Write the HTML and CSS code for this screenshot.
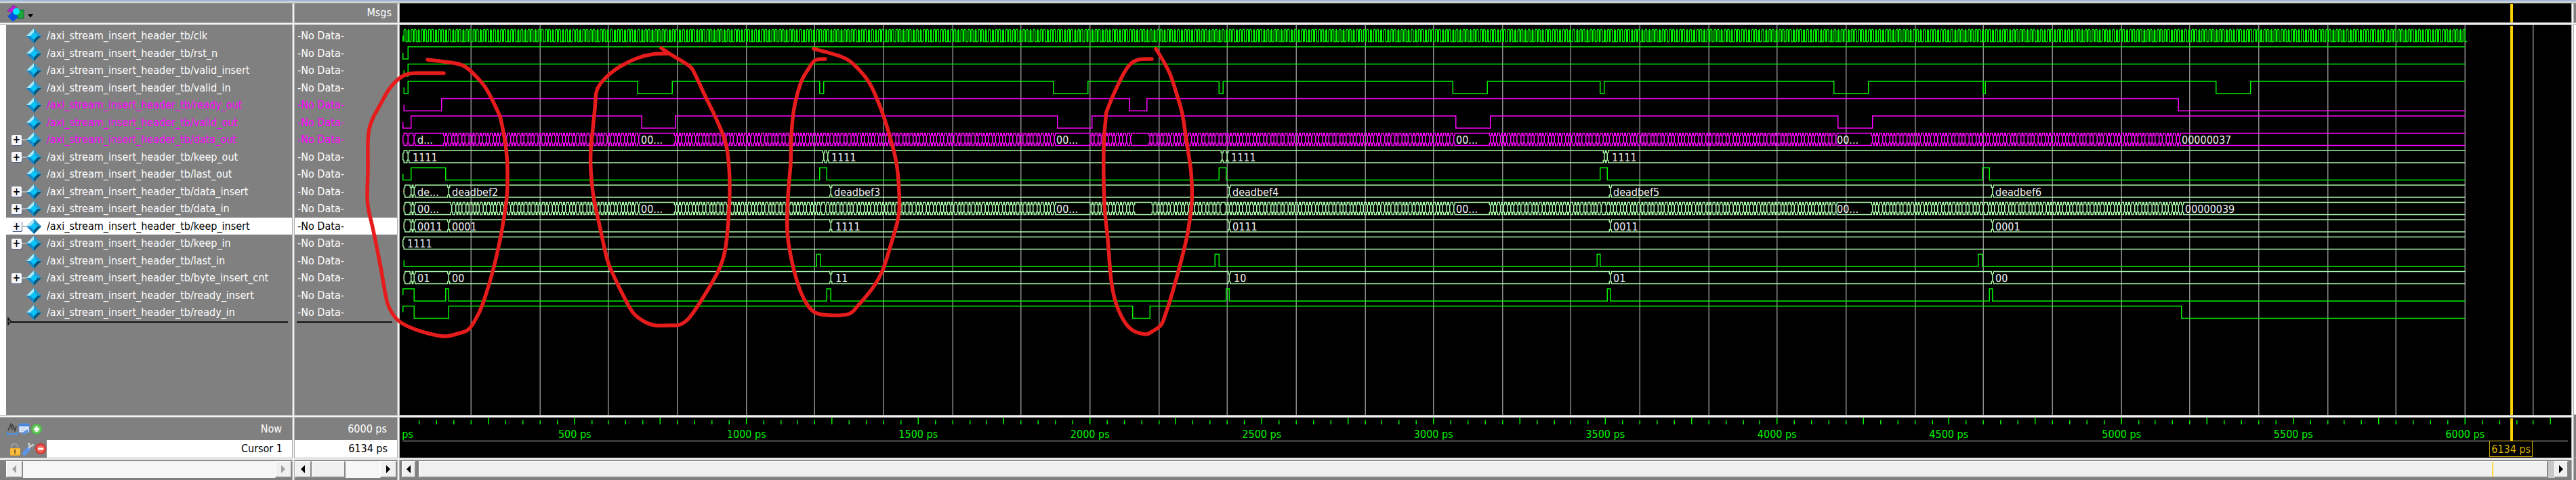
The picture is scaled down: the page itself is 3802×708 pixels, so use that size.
FILE: index.html
```html
<!DOCTYPE html>
<html lang="en">
<head>
<meta charset="utf-8">
<title>Wave</title>
<link rel="stylesheet" href="styles.css">
</head>
<body>
<svg class="defs" aria-hidden="true">
  <symbol id="gem" viewBox="0 0 22 22">
    <path d="M11 0 22 11 11 22 0 11Z" fill="#1488c8"/>
    <path d="M11 0 0 11 6 11 11 6Z" fill="#a8e8f8"/>
    <path d="M11 0 22 11 16 11 11 6Z" fill="#2a9ccf"/>
    <path d="M22 11 11 22 11 16 16 11Z" fill="#045880"/>
    <path d="M11 5.500 16.500 11 11 16.500 5.500 11Z" fill="#08c4f8"/>
  </symbol>
</svg>
<main class="wave-window">
  <div class="titlebar"></div>

  <header class="cell tools">
    <button class="menu" aria-label="Signal menu">
      <svg width="38" height="28" viewBox="0 0 38 28">
        <path d="M0 11 9 3 14 7 8 14Z" fill="#c41ee0" stroke="#7a1090"/>
        <rect x="14" y="10" width="10" height="12" fill="#18a83c" stroke="#0c7428"/>
        <path d="M8 12 16 20 8 27 0 19Z" fill="#0850e0"/>
        <circle cx="13" cy="12" r="5" fill="#00e8ff"/>
        <path d="M30 16h8l-4 5Z" fill="#000"/>
      </svg>
    </button>
  </header>
  <div class="cell msgs-head">Msgs</div>
  <div class="cell band"><div class="cursor-clip"><i class="cursor"></i></div></div>
  <div class="cell edge"></div>

  <section class="cell names">
    <ul class="rows" id="names"></ul>
    <svg class="marker" width="8" height="12" viewBox="0 0 8 12"><path d="M1 1v10l4-5Z" fill="none" stroke="#111" stroke-width="1.500"/></svg>
    <hr>
  </section>
  <section class="cell values">
    <ul class="rows" id="values"></ul>
    <hr>
  </section>
  <section class="cell plot">
    <svg id="plot" role="img" aria-label="Waveforms"></svg>
    <div class="cursor-clip"><i class="cursor"></i></div>
  </section>
  <div class="cell edge light"></div>

  <section class="cell labels">
    <div class="line">
      <svg width="56" height="24" viewBox="0 0 56 24" aria-hidden="true">
        <path d="M2 14 6 5l2 8M8 5l4 9 2-6" fill="none" stroke="#444" stroke-width="2"/>
        <path d="M1 19h14M1 16v5M15 16v5" stroke="#4a90e0" stroke-width="2"/>
        <rect x="18" y="4" width="15" height="13" rx="1" fill="#e4edfa" stroke="#5f96e0"/>
        <path d="M18 6h15" stroke="#4a86dc" stroke-width="4"/>
        <path d="M21 11h7M21 14h5" stroke="#8fa8c8"/>
        <path d="M22 18l8-6 2 3-5 5Z" fill="#5f96e0"/>
        <circle cx="44" cy="12" r="8" fill="#4fb846"/><circle cx="44" cy="12" r="6" fill="#74cc68"/>
        <path d="M44 8v8M40 12h8" stroke="#fff" stroke-width="3"/>
      </svg>
      <span>Now</span>
    </div>
    <div class="line">
      <svg width="59" height="24" viewBox="0 0 59 24" aria-hidden="true">
        <path d="M7 12V9a4.500 4.500 0 0 1 9 0v3" fill="none" stroke="#a0a0a0" stroke-width="2"/>
        <rect x="5" y="11" width="15" height="11" rx="1" fill="#f5b02c"/>
        <path d="M6 14h13M6 18h13" stroke="#ffdc80"/><path d="M12 13v6" stroke="#8a5a10" stroke-width="2"/>
        <path d="M26 19 32 12" stroke="#5c94e8" stroke-width="6" stroke-linecap="round"/>
        <path d="M32 11l3-3M33 3q-1 5 2 5 3 0 4-3" fill="none" stroke="#c4c8cc" stroke-width="3"/>
        <circle cx="50" cy="12" r="8" fill="#d83030"/><circle cx="50" cy="12" r="6" fill="#f06458"/>
        <path d="M46 12h8" stroke="#fff" stroke-width="3"/>
      </svg>
      <label for="now" class="field">Cursor 1</label>
    </div>
  </section>
  <section class="cell times">
    <div class="line"><span>6000 ps</span></div>
    <div class="line"><output id="now" class="field">6134 ps</output></div>
  </section>
  <section class="cell timeline">
    <svg id="timeline" role="img" aria-label="Time axis"></svg>
    <div class="cursor-clip axis"><i class="cursor"></i></div>
    <span class="cursor-label">6134 ps</span>
  </section>
  <div class="cell edge"></div>

  <div class="cell scroll first">
    <button class="off" aria-label="Scroll names left"><svg width="8" height="12"><path d="M7 0v12L1 6Z"/></svg></button>
    <div class="track"></div>
    <button class="off" aria-label="Scroll names right"><svg width="8" height="12"><path d="M1 0v12l6-6Z"/></svg></button>
  </div>
  <div class="cell scroll">
    <button aria-label="Scroll values left"><svg width="8" height="12"><path d="M7 0v12L1 6Z"/></svg></button>
    <div class="track"><div class="thumb small"></div></div>
    <button aria-label="Scroll values right"><svg width="8" height="12"><path d="M1 0v12l6-6Z"/></svg></button>
  </div>
  <div class="cell scroll wide">
    <button aria-label="Scroll waves left"><svg width="8" height="12"><path d="M7 0v12L1 6Z"/></svg></button>
    <div class="track groove"><div class="thumb"><i></i></div></div>
    <button aria-label="Scroll waves right"><svg width="8" height="12"><path d="M1 0v12l6-6Z"/></svg></button>
  </div>
  <div class="cell edge"></div>

  <svg class="ink" viewBox="0 0 3802 708" preserveAspectRatio="none" id="ink" aria-hidden="true"></svg>
</main>
<script src="wave.js"></script>
</body>
</html>
```
FILE: styles.css
```css
* { box-sizing: border-box; }

body {
  margin: 0;
  background: #f4f4f4;
  color: #fff;
  font: 16px/20px "DejaVu Sans Condensed", "DejaVu Sans", Verdana, sans-serif;
}

.defs { position: absolute; width: 0; height: 0; }

.wave-window {
  position: relative;
  display: grid;
  grid-template-columns: 431px 151px minmax(0, 1fr) 3px;
  grid-template-rows: 5px 28px minmax(579px, 1fr) 63px 33px;
  column-gap: 4px;
  min-height: 100vh;
  overflow: hidden;
}

.titlebar {
  grid-column: 1 / -1;
  background: linear-gradient(#9db6d4 2px, #d4d8dc 2px, #d4d8dc 4px, #808080 4px);
}

.cell {
  position: relative;
  min-width: 0;
  background: #808080;
  box-shadow: 0 0 0 1px #b0b0b0;
}

.names, .values, .plot, .edge.light, .labels, .times, .timeline, .scroll { margin-top: 4px; }
.edge.light { background: #fff; }

.tools { padding-left: 11px; }
button { margin: 0; padding: 0; border: 0; background: none; }
.menu { display: block; height: 28px; }
.menu svg { display: block; }

.msgs-head {
  display: flex;
  align-items: center;
  justify-content: flex-end;
  padding-right: 8px;
}

.band, .plot, .timeline { background: #000; }

.rows {
  display: grid;
  grid-auto-rows: 26px 25px;
  margin: 0;
  padding: 3px 0 0;
  list-style: none;
}

.rows li {
  display: flex;
  align-items: center;
  white-space: nowrap;
}

.names { border-left: 9px solid #fff; }
.names li { padding-left: 8px; }
.names li span { margin-left: 8px; }
.names svg { flex: none; }
.slot { display: flex; align-items: center; width: 22px; height: 22px; }
.toggle {
  width: 15px;
  height: 15px;
  border-radius: 2px;
  background: #f8f8fc;
  box-shadow: 1px 1px 0 #56648c;
  color: #000;
  font: bold 15px/14px "DejaVu Sans Condensed", "DejaVu Sans", sans-serif;
}
.slot .toggle + i { width: 7px; height: 2px; background: #b4b4b4; }
.values li { padding-left: 4px; }
.alt { color: #ff00ff; }
li.selected { background: #fff; color: #000; }

hr { height: 2px; margin: 0 7px 0 3px; border: 0; background: #101010; }
.names hr { margin: 0 6px 0 7px; }
.marker { position: absolute; left: 2px; top: 431px; }

.plot svg, .timeline svg { display: block; width: 100%; height: 100%; position: absolute; }
text { font: 16px "DejaVu Sans Condensed", "DejaVu Sans", Verdana, sans-serif; }

.cursor-clip { position: absolute; inset: 1px 0 0; overflow: hidden; }
.cursor-clip.axis { bottom: 25px; }
.cursor {
  position: absolute;
  left: 97.200%;
  width: 4px;
  height: 100%;
  background: #ffd000;
}
.cursor-label {
  position: absolute;
  right: 57px;
  bottom: 1px;
  padding: 2px 2px 0;
  border: 1px solid #d0a800;
  background: #000;
  color: #d8b000;
}

.labels, .times { display: grid; grid-template-rows: 33px 26px; text-align: right; }
.line { display: flex; align-items: center; justify-content: space-between; padding-left: 10px; }
.line svg { flex: none; }
.line > span { margin-left: auto; padding-right: 15px; }
.line .field {
  flex: 1;
  align-self: stretch;
  padding: 3px 14px 0 0;
  background: #fff;
  color: #000;
}
.times .line { padding-left: 0; }

.scroll { display: flex; padding: 1px 0 3px; }
.scroll.first { padding-left: 9px; }
.scroll.wide { padding: 1px 4px 3px 3px; }
.scroll button {
  flex: none;
  display: grid;
  place-items: center;
  width: 25px;
  background: #f0f0f0;
  border: 1px solid #fff;
  border-right: 2px solid #888;
  border-bottom: 2px solid #888;
}
.scroll.wide button { width: 21px; }
.scroll .off svg { fill: #a0a0a0; }
.track { flex: 1; display: flex; background: #f6f6f6; }
.thumb { flex: 1; background: #f0f0f0; border: 1px solid #fff; border-right: 2px solid #888; border-bottom: 2px solid #888; }
.thumb.small { flex: none; width: 50px; }
.groove { margin: 0 0 0 4px; padding-right: 9px; background: #c8c8c8; }
.groove .thumb { display: flex; justify-content: flex-end; padding-right: 79px; }
.groove i { width: 2px; background: #ffd84a; }

.ink { position: absolute; inset: 0; width: 100%; height: 100%; pointer-events: none; }
```
FILE: wave.js
```js
const G = '#00f000', M = '#ff00ff', P = '#a8f8a8';
const prefix = '/axi_stream_insert_header_tb/';
const W0 = 3205;      // design width of the wave pane
const ORIGIN = 590;   // left edge of the wave pane in data coordinates
const END = 3638;

// kind "bit": start level, then toggle positions. kind "bus": cells as [from, to, text, textX], "~" = dense run.
const signals = [
  { n: 'clk', kind: 'clk', c: G },
  { n: 'rst_n', kind: 'bit', c: G, s: 594.5, l: 0, e: [602] },
  { n: 'valid_insert', kind: 'bit', c: G, s: 596, l: 0, e: [602] },
  { n: 'valid_in', kind: 'bit', c: G, s: 596, l: 0, e: [602, 941, 992.5, 1209.5, 1216, 1555, 1606, 1799, 1804.5, 2144, 2195.5, 2362, 2368, 2706.5, 2758, 2926.5, 2930.5, 3270.6, 3322] },
  { n: 'ready_out', kind: 'bit', c: M, s: 596, l: 0, e: [652, 1667, 1693, 3215], alt: 1 },
  { n: 'valid_out', kind: 'bit', c: M, s: 594.5, l: 0, e: [607, 947.5, 997, 1561, 1612, 2149, 2200, 2713, 2764], alt: 1 },
  { n: 'data_out', kind: 'bus', c: M, alt: 1, plus: 1, cells: [[594.5, 602], [602, 611], [611, 656, 'd...', 617], [656, 942, '~'], [942, 996, '00...', 947], [996, 1556, '~'], [1556, 1610, '00...', 1560], [1610, 1668, '~'], [1668, 1697], [1697, 2145, '~'], [2145, 2199, '00...', 2150], [2199, 2709, '~'], [2709, 2763, '00...', 2712], [2763, 3217, '~'], [3217, END, '00000037', 3221]] },
  { n: 'keep_out', kind: 'bus', c: P, plus: 1, cells: [[594.5, 602.5], [602.5, 1215, '1111', 610], [1215, 1221], [1221, 1803, '1111', 1228], [1803, 1811], [1811, 2367, '1111', 1818], [2367, 2372.5], [2372.5, END, '1111', 2380]] },
  { n: 'last_out', kind: 'bit', c: G, s: 594.5, l: 0, e: [607, 657.5, 1209.5, 1220, 1799.5, 1810, 2362, 2372.5, 2926, 2936] },
  { n: 'data_insert', kind: 'bus', c: P, plus: 1, x: 1, cells: [[596, 607], [607, 611], [611, 662, 'de...', 617], [662, 1226, 'deadbef2', 668], [1226, 1814, 'deadbef3', 1232], [1814, 2376, 'deadbef4', 1820], [2376, 2940, 'deadbef5', 2382], [2940, END, 'deadbef6', 2946]] },
  { n: 'data_in', kind: 'bus', c: P, plus: 1, x: 1, cells: [[596, 607], [607, 611], [611, 667, '00...', 617], [667, 942, '~'], [942, 996, '00...', 947], [996, 1211, '~'], [1211, 1219], [1219, 1556, '~'], [1556, 1610, '00...', 1560], [1610, 1673, '~'], [1673, 1702], [1702, 1800, '~'], [1800, 1809], [1809, 2145, '~'], [2145, 2199, '00...', 2150], [2199, 2363, '~'], [2363, 2371], [2371, 2709, '~'], [2709, 2763, '00...', 2712], [2763, 2927, '~'], [2927, 2934], [2934, 3221, '~'], [3221, END, '00000039', 3226]] },
  { n: 'keep_insert', kind: 'bus', c: P, plus: 1, x: 1, sel: 1, cells: [[596, 607], [607, 611], [611, 662, '0011', 617], [662, 1226, '0001', 668], [1226, 1814, '1111', 1234], [1814, 2376, '0111', 1820], [2376, 2940, '0011', 2382], [2940, END, '0001', 2946]] },
  { n: 'keep_in', kind: 'bus', c: P, plus: 1, cells: [[594.5, END, '1111', 602]] },
  { n: 'last_in', kind: 'bit', c: G, s: 596, l: 0, e: [1204.5, 1210.5, 1793.5, 1799.5, 2357, 2362, 2920, 2926] },
  { n: 'byte_insert_cnt', kind: 'bus', c: P, plus: 1, x: 1, cells: [[596, 607], [607, 611], [611, 662, '01', 617], [662, 1226, '00', 668], [1226, 1814, '11', 1234], [1814, 2376, '10', 1822], [2376, 2940, '01', 2382], [2940, END, '00', 2946]] },
  { n: 'ready_insert', kind: 'bit', c: G, s: 594.5, l: 1, e: [611, 657.5, 662.5, 1220, 1226.5, 1810, 1814.5, 2372.5, 2376, 2936.5, 2940] },
  { n: 'ready_in', kind: 'bit', c: G, s: 594.5, l: 1, e: [611, 662.5, 1672, 1697.5, 3219.5] }
];

document.getElementById('names').innerHTML = signals.map(s =>
  `<li class="${s.alt ? 'alt' : ''}${s.sel ? 'selected' : ''}"><div class="slot">${s.plus ? `<button class="toggle" aria-label="Expand ${s.n}">+</button><i></i>` : ''}</div><svg width="22" height="22"><use href="#gem"/></svg><span>${prefix}${s.n}</span></li>`).join('');
document.getElementById('values').innerHTML = signals.map(s =>
  `<li class="${s.alt ? 'alt' : ''}${s.sel ? 'selected' : ''}">-No Data-</li>`).join('');

const line = (d, c, w = 1.5) => `<path d="${d}" fill="none" stroke="${c}" stroke-width="${w}"/>`;

function draw() {
  const plot = document.getElementById('plot');
  const k = plot.getBoundingClientRect().width / W0;
  const snap = v => Math.round((v - 0.25) / 1.5) * 1.5 + 0.25;
  const X = v => snap((v - ORIGIN) * k);
  const T = t => X(594 + t * 0.50733);
  let out = '';

  for (let t = 200; t <= 6200; t += 200) out += line(`M${T(t)} 0V575`, '#8c8c8c');

  signals.forEach((s, i) => {
    const h = 6.5 + 25.5 * i, l = h + 18, m = h + 9;
    let d = '';
    if (s.kind === 'clk') {
      d = `M${T(0)} ${m}V${l}`;
      for (let t = 5; t < 6000; t += 10) {
        const a = T(t), b = T(t + 5);
        d += `M${a} ${l}V${h + 0.75}M${a} ${h}H${b}M${b} ${h + 0.75}V${l + 0.75}`;
        d += `M${b} ${l}H${T(t + 10)}`;
      }
    } else if (s.kind === 'bit') {
      let lvl = s.l;
      d = `M${X(s.s)} ${m}V${lvl ? h : l}`;
      s.e.forEach(e => { lvl = 1 - lvl; d += `H${X(e)}V${lvl ? h : l}`; });
      d += `H${X(END)}`;
    } else {
      const cell = (a, b, open) => {
        const p = a + 1.5, q = b - 1.5;
        d += open
          ? `M${b} ${h}H${p}V${h + 3}L${a} ${h + 4.5}V${l - 4.5}L${p} ${l - 3}V${l}H${b}`
          : `M${a} ${h + 4.5}L${p} ${h + 3}V${h}H${q}V${h + 3}L${b} ${h + 4.5}V${l - 4.5}L${q} ${l - 3}V${l}H${p}V${l - 3}L${a} ${l - 4.5}Z`;
      };
      s.cells.forEach(([a, b, txt, tx]) => {
        if (txt === '~') {
          const n = Math.max(1, Math.round((b - a) / 5.0733)), w = (b - a) / n;
          for (let j = 0; j < n; j++) cell(X(a + j * w), X(a + (j + 1) * w), false);
        } else {
          cell(X(a), X(b), b === END);
          if (txt) out += `<text x="${Math.round((tx - ORIGIN - 1) * k)}" y="${h + 15.5}" fill="#f0f0f0">${txt}</text>`;
        }
      });
      if (s.x) out += line(`M${X(594)} ${m}h2`, '#e00000');
    }
    out += line(d, s.c);
  });
  plot.innerHTML = out;

  let ax = line(`M4 34.5H${W0 * k - 5}`, '#808080');
  for (let t = 50; t <= 6250; t += 50) ax += line(t % 250 ? `M${T(t)} 4V10` : `M${T(t)} 0V10`, G);
  for (let t = 0; t <= 6000; t += 500)
    ax += `<text x="${T(t)}" y="30" text-anchor="middle" fill="${G}">${t} ps</text>`;
  document.getElementById('timeline').innerHTML =
    `<clipPath id="axis-clip"><rect x="4" width="100%" height="100%"/></clipPath><g clip-path="url(#axis-clip)">${ax}</g>`;
}

// Freehand red marks
const strokes = [
  [[655,108],[620,108],[603,109],[590,115],[574,132],[562,153],[551,173],[545,190],[543,210],[543,250],[542,290],[544,310],[551,340],[562,395],[570,440],[576,457],[588,473],[608,484],[637,493],[658,496],[676,492],[690,487],[699,476],[713,447],[733,377],[747,300],[749,253],[747,220],[740,180],[735,165],[717,130],[700,110],[686,98],[670,93],[631,88]],
  [[976,71],[988,79],[1017,97],[1025,108],[1040,140],[1057,175],[1070,207],[1075,235],[1077,275],[1075,325],[1070,370],[1060,400],[1037,440],[1017,469],[1003,479],[985,480],[967,480],[952,475],[935,462],[922,440],[905,405],[896,382],[885,333],[876,290],[872,250],[872,220],[875,190],[878,160],[880,137],[885,125],[900,109],[917,97],[940,86],[963,80],[988,79]],
  [[1201,72],[1240,83],[1260,95],[1283,122],[1300,160],[1313,200],[1323,240],[1327,283],[1326,320],[1313,367],[1303,398],[1290,422],[1267,450],[1253,463],[1225,465],[1203,461],[1190,447],[1178,420],[1167,377],[1162,340],[1163,290],[1167,240],[1168,200],[1172,160],[1182,122],[1193,102],[1203,89],[1218,87]],
  [[1706,72],[1717,90],[1728,112],[1738,143],[1745,168],[1752,213],[1758,255],[1759,298],[1753,343],[1745,378],[1730,433],[1720,464],[1713,480],[1697,491],[1690,493],[1673,488],[1660,475],[1647,447],[1640,413],[1635,353],[1630,300],[1629,220],[1632,175],[1635,160],[1655,115],[1667,96],[1680,88],[1700,87]]
];
document.getElementById('ink').innerHTML = strokes.map(p => {
  let d = `M${p[0]}`;
  for (let i = 0; i < p.length - 1; i++) {
    const a = p[i - 1] || p[i], b = p[i], c = p[i + 1], e = p[i + 2] || c;
    d += `C${b[0] + (c[0] - a[0]) / 6},${b[1] + (c[1] - a[1]) / 6} ${c[0] - (e[0] - b[0]) / 6},${c[1] - (e[1] - b[1]) / 6} ${c}`;
  }
  return `<path d="${d}" fill="none" stroke="#e61c1c" stroke-width="5.500" stroke-linecap="round" stroke-linejoin="round"/>`;
}).join('');

draw();
window.addEventListener('resize', draw);
```
